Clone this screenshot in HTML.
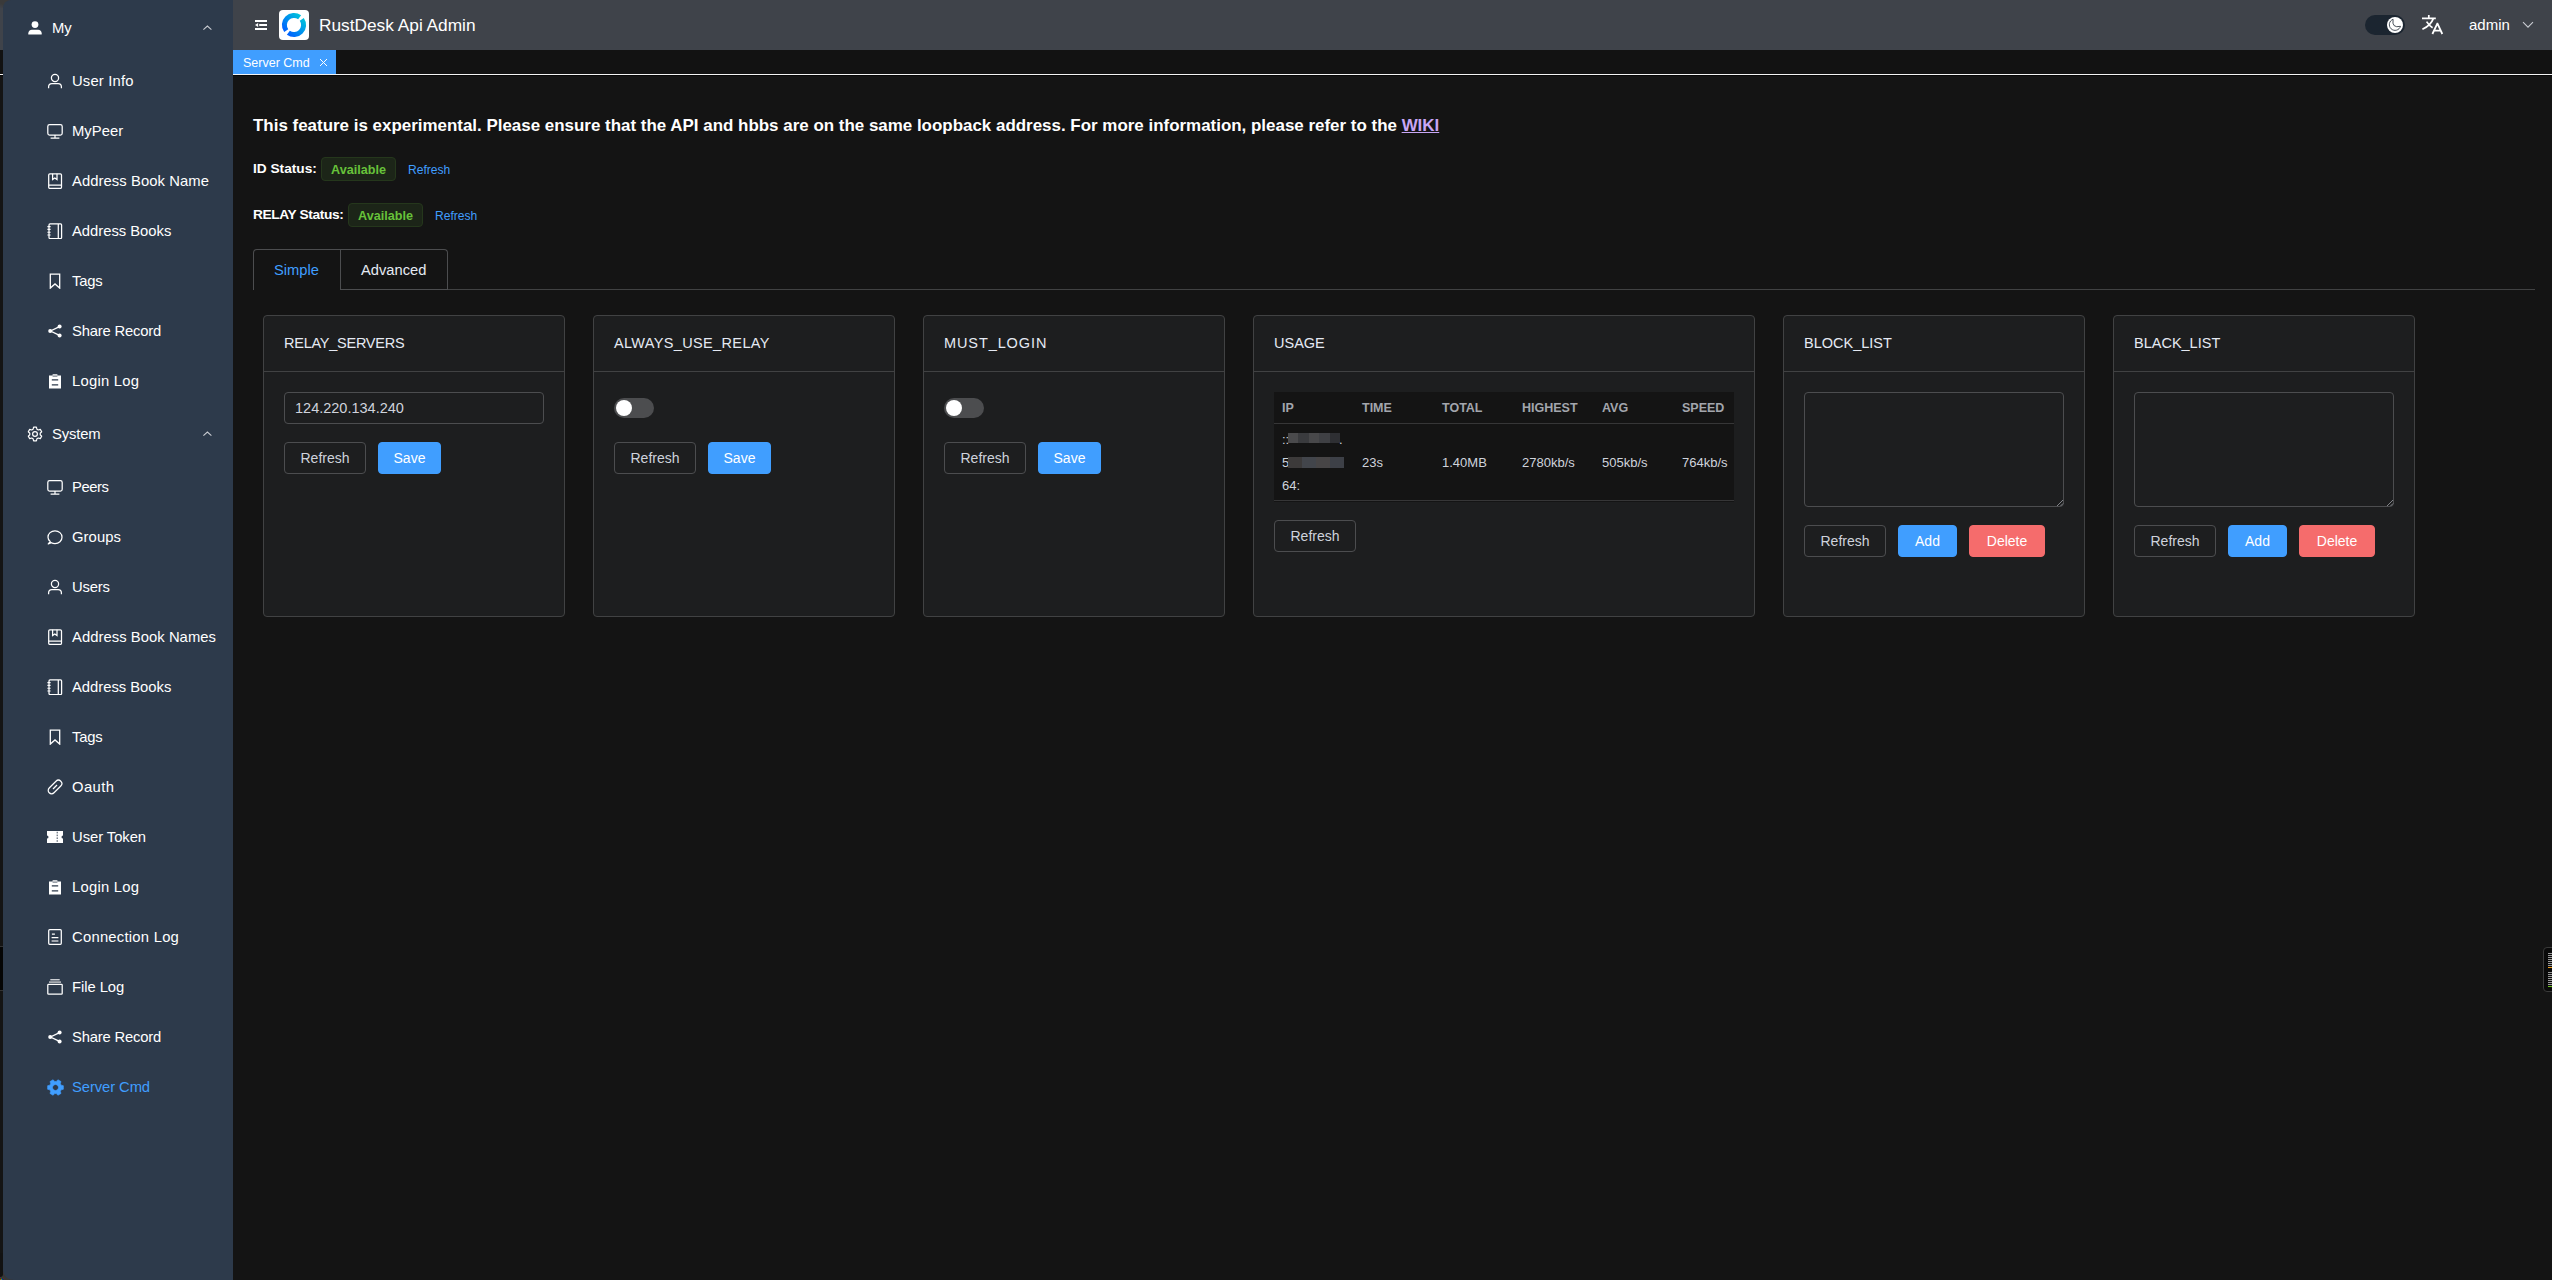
<!DOCTYPE html>
<html><head><meta charset="utf-8"><title>RustDesk Api Admin</title>
<style>
*{box-sizing:border-box;margin:0;padding:0}
html,body{width:2552px;height:1280px;overflow:hidden;background:#141414;font-family:"Liberation Sans",sans-serif;color:#e5eaf3}
.abs{position:absolute;white-space:nowrap}
#hdr{position:absolute;left:0;top:0;width:2552px;height:50px;background:#3f434a}
#tagbar{position:absolute;left:0;top:50px;width:2552px;height:24px;background:#121212}
#tagline{position:absolute;left:0;top:74px;width:2552px;height:1px;background:#f4f4f4;box-shadow:0 1px 0 #060606}
#side{position:absolute;left:3px;top:0;width:230px;height:1280px;background:#2d3a4b;border-radius:8px 0 0 10px}
.mi{position:absolute;left:0;width:230px;height:50px;font-size:14.8px;color:#fff;line-height:50px}
.mi .ic{position:absolute;left:44px;top:17px;width:16px;height:16px;line-height:0}
.mi .tx{position:absolute;left:69px;top:0;white-space:nowrap}
.mi .chev{position:absolute;left:198px;top:21px;line-height:0}
.card{position:absolute;top:315px;height:302px;background:#1d1e1f;border:1px solid #414243;border-radius:4px}
.card .ch{height:56px;border-bottom:1px solid #414243;padding-left:20px;font-size:14.5px;line-height:54px;color:#e5eaf3;white-space:nowrap}
.btn{position:absolute;height:32px;border:1px solid #4c4d4f;border-radius:4px;font-size:14px;line-height:30px;text-align:center;color:#cfd3dc;background:transparent;white-space:nowrap}
.btn.p{background:#409eff;border-color:#409eff;color:#fff}
.btn.d{background:#f56c6c;border-color:#f56c6c;color:#fff}
.sw{position:absolute;width:40px;height:20px;border-radius:10px;background:#4c4d4f}
.sw::after{content:"";position:absolute;left:2px;top:2px;width:16px;height:16px;border-radius:50%;background:#fff}
.tagok{position:absolute;height:24px;border:1px solid #25371c;background:#1c2518;border-radius:4px;color:#67c23a;font-weight:bold;font-size:12.6px;line-height:22px;padding-top:1px;text-align:center;white-space:nowrap}
.lnk{font-size:12.1px;line-height:18px;color:#409eff}
.inp{position:absolute;border:1px solid #4c4d4f;border-radius:4px}
.th{position:absolute;top:399px;font-size:12.5px;line-height:18px;font-weight:bold;color:#a3a6ad;white-space:nowrap}
.td{position:absolute;font-size:13px;line-height:23px;color:#cfd3dc;white-space:nowrap}

</style></head><body>
<div id="hdr"></div>
<div id="tagbar"></div>
<div id="tagline"></div>
<div class="abs" style="left:0;top:946px;width:3px;height:45px;background:#050505;border-top:1px solid #333;border-bottom:1px solid #333"></div>
<!-- hamburger -->
<svg class="abs" style="left:255px;top:19px" width="12" height="12" viewBox="0 0 12 12"><path d="M0 2 h12 M4.2 6 h7.8 M0 10 h12" stroke="#fff" stroke-width="2"/><path d="M0 6 l3.1-2 v4z" fill="#fff"/></svg>
<!-- logo -->
<svg class="abs" style="left:279px;top:10px" width="30" height="30" viewBox="0 0 30 30">
<defs><linearGradient id="lg" x1="0" y1="1" x2="1" y2="0"><stop offset="0" stop-color="#0062ff"/><stop offset="1" stop-color="#00c0dc"/></linearGradient></defs>
<rect x="0" y="0" width="30" height="30" rx="4" fill="#fff"/>
<path d="M7.23 20.64 A9.6 9.6 0 0 1 20.64 7.23" fill="none" stroke="url(#lg)" stroke-width="5"/>
<path d="M22.77 9.36 A9.6 9.6 0 0 1 9.36 22.77" fill="none" stroke="url(#lg)" stroke-width="5"/>
</svg>
<div class="abs" style="left:319px;top:13px;font-size:17.3px;line-height:24px;color:#fff">RustDesk Api Admin</div>
<!-- right -->
<div class="abs" style="left:2365px;top:15px;width:40px;height:20px;border-radius:10px;background:#1b2530"></div>
<div class="abs" style="left:2387px;top:17px;width:16px;height:16px;border-radius:50%;background:#fff"></div>
<svg class="abs" style="left:2387px;top:17px" width="16" height="16" viewBox="0 0 16 16"><path d="M6.1 2.3 A5.7 5.7 0 1 0 13.5 9.3 Q4.5 11.5 6.1 2.3z" fill="none" stroke="#1b2530" stroke-width="0.8"/></svg>
<svg class="abs" style="left:2421px;top:14px" width="24" height="22" viewBox="0 0 24 22"><path d="M1 4.3 h13.8 M7.8 1 v3.3 M12.3 4.6 C10.5 9.5 6.5 13 1.4 15.2 M5.6 7.6 C7.5 10.5 9.5 12.5 11.6 13.7" fill="none" stroke="#fff" stroke-width="1.7"/><path d="M11.4 20 L16.3 9.6 h0.2 L21.3 20 M13.3 16.7 h6.2" fill="none" stroke="#fff" stroke-width="1.8"/></svg>
<div class="abs" style="left:2469px;top:13px;font-size:15px;line-height:24px;color:#fff">admin</div>
<svg class="abs" style="left:2522px;top:21px" width="12" height="8" viewBox="0 0 12 8"><path d="M1 1.2 L6 6.2 L11 1.2" fill="none" stroke="#c9ccd2" stroke-width="1.1"/></svg>
<!-- active tag -->
<div class="abs" style="left:233px;top:50px;width:103px;height:24px;background:#409eff"></div>
<div class="abs" style="left:243px;top:51px;font-size:12.5px;line-height:24px;color:#fff">Server Cmd</div>
<svg class="abs" style="left:318.5px;top:57.5px" width="9" height="9" viewBox="0 0 9 9"><path d="M1 1 L8 8 M8 1 L1 8" stroke="#fff" stroke-width="1"/></svg>
<div class="abs" style="left:0;top:1268px;width:16px;height:12px;background:linear-gradient(20deg,#3a3a3a,#2f2f2f)"></div>
<div class="abs" style="left:0;top:1253px;width:3px;height:24px;background:#121212;border-radius:0 0 3px 0"></div>
<div class="abs" style="left:0;top:1279px;width:1px;height:1px;background:#f00"></div>
<div class="abs" style="left:1px;top:1279px;width:1px;height:1px;background:#0f0"></div>
<div class="abs" style="left:2px;top:1279px;width:1px;height:1px;background:#00f"></div>
<div class="abs" style="left:0;top:0;width:12px;height:8px;background:linear-gradient(200deg,#3a3a3a 60%,#3f4249)"></div>

<div id="side">
<div class="mi" style="top:3px;color:#fff"><span class="ic" style="left:24px"><svg viewBox="0 0 16 16" width="16" height="16"><circle cx="8" cy="4.6" r="3.4" fill="#fff"/><path d="M1.3 14.6 v-1.2 c0-2 1.6-3.6 3.6-3.6 h6.2 c2 0 3.6 1.6 3.6 3.6 v1.2 z" fill="#fff"/></svg></span><span class="tx" style="left:49px;letter-spacing:0px">My</span><span class="chev"><svg viewBox="0 0 12 8" width="12" height="8" fill="none" stroke="#c9ccd2" stroke-width="1.1"><path d="M2.4 5.7 L6.4 2.1 L10.4 5.7"/></svg></span></div>
<div class="mi" style="top:56px;color:#fff"><span class="ic" style="left:44px"><svg viewBox="0 0 16 16" width="16" height="16" fill="none" stroke="#fff" stroke-width="1.25"><circle cx="8" cy="5" r="3.6"/><path d="M1.6 15.3 v-1.3 c0-1.9 1.5-3.3 3.3-3.3 h6.2 c1.9 0 3.3 1.5 3.3 3.3 v1.3"/></svg></span><span class="tx" style="left:69px;letter-spacing:0.172px">User Info</span></div>
<div class="mi" style="top:106px;color:#fff"><span class="ic" style="left:44px"><svg viewBox="0 0 16 16" width="16" height="16" fill="none" stroke="#fff" stroke-width="1.25"><rect x="0.8" y="1.6" width="14.4" height="10.4" rx="1.8"/><path d="M8 12 v3 M3.6 15.2 h8.8"/></svg></span><span class="tx" style="left:69px;letter-spacing:0.037px">MyPeer</span></div>
<div class="mi" style="top:156px;color:#fff"><span class="ic" style="left:44px"><svg viewBox="0 0 16 16" width="16" height="16" fill="none" stroke="#fff" stroke-width="1.25"><rect x="1.7" y="0.8" width="12.8" height="14.6" rx="1.2"/><path d="M1.7 12.2 h12.8 M5.6 0.8 v5.8 l2.2-1.5 l2.2 1.5 v-5.8"/></svg></span><span class="tx" style="left:69px;letter-spacing:0.076px">Address Book Name</span></div>
<div class="mi" style="top:206px;color:#fff"><span class="ic" style="left:44px"><svg viewBox="0 0 16 16" width="16" height="16" fill="none" stroke="#fff" stroke-width="1.25"><rect x="2" y="0.9" width="12.6" height="14.6" rx="1"/><path d="M11.3 0.9 v14.6"/><path d="M0.4 3.6 h3.2 M0.4 6.4 h3.2 M0.4 9.2 h3.2 M0.4 12 h3.2" stroke-width="1.1"/></svg></span><span class="tx" style="left:69px;letter-spacing:-0.018px">Address Books</span></div>
<div class="mi" style="top:256px;color:#fff"><span class="ic" style="left:44px"><svg viewBox="0 0 16 16" width="16" height="16" fill="none" stroke="#fff" stroke-width="1.3"><path d="M3.3 1.2 h9.4 v13.9 l-4.7-4.2 l-4.7 4.2 z"/></svg></span><span class="tx" style="left:69px;letter-spacing:-0.218px">Tags</span></div>
<div class="mi" style="top:306px;color:#fff"><span class="ic" style="left:44px"><svg viewBox="0 0 16 16" width="16" height="16"><path d="M12.5 3.6 L3.5 8 L12.5 12.4" fill="none" stroke="#fff" stroke-width="1.3"/><circle cx="12.6" cy="3.5" r="2" fill="#fff"/><circle cx="3.2" cy="8" r="2" fill="#fff"/><circle cx="12.6" cy="12.5" r="2" fill="#fff"/></svg></span><span class="tx" style="left:69px;letter-spacing:-0.192px">Share Record</span></div>
<div class="mi" style="top:356px;color:#fff"><span class="ic" style="left:44px"><svg viewBox="0 0 16 16" width="16" height="16"><path d="M2 2.4 h3.6 v-1.2 h4.8 v1.2 h3.6 v13 h-12 z" fill="#fff"/><path d="M4.8 6.9 h6.4 M4.8 11.9 h6.4" stroke="#2d3a4b" stroke-width="1.2"/><path d="M5.6 3.1 h4.8" stroke="#2d3a4b" stroke-width="0.8"/></svg></span><span class="tx" style="left:69px;letter-spacing:0.248px">Login Log</span></div>
<div class="mi" style="top:409px;color:#fff"><span class="ic" style="left:24px"><svg viewBox="0 0 16 16" width="16" height="16" fill="none" stroke="#fff" stroke-width="1.2"><path d="M6.6 1.2 h2.8 l0.5 2 l1.4 0.8 l2-0.6 l1.4 2.4 l-1.5 1.4 v1.6 l1.5 1.4 l-1.4 2.4 l-2-0.6 l-1.4 0.8 l-0.5 2 h-2.8 l-0.5-2 l-1.4-0.8 l-2 0.6 l-1.4-2.4 l1.5-1.4 v-1.6 l-1.5-1.4 l1.4-2.4 l2 0.6 l1.4-0.8 z" stroke-linejoin="round"/><circle cx="8" cy="8" r="2.4"/></svg></span><span class="tx" style="left:49px;letter-spacing:-0.14px">System</span><span class="chev"><svg viewBox="0 0 12 8" width="12" height="8" fill="none" stroke="#c9ccd2" stroke-width="1.1"><path d="M2.4 5.7 L6.4 2.1 L10.4 5.7"/></svg></span></div>
<div class="mi" style="top:462px;color:#fff"><span class="ic" style="left:44px"><svg viewBox="0 0 16 16" width="16" height="16" fill="none" stroke="#fff" stroke-width="1.25"><rect x="0.8" y="1.6" width="14.4" height="10.4" rx="1.8"/><path d="M8 12 v3 M3.6 15.2 h8.8"/></svg></span><span class="tx" style="left:69px;letter-spacing:-0.432px">Peers</span></div>
<div class="mi" style="top:512px;color:#fff"><span class="ic" style="left:44px"><svg viewBox="0 0 16 16" width="16" height="16" fill="none" stroke="#fff" stroke-width="1.25"><path d="M3.2 12.6 C1.8 11.5 1 10 1 8.2 C1 4.6 4.1 1.8 8 1.8 s7 2.8 7 6.4 s-3.1 6.4-7 6.4 c-1.3 0-2.6-0.3-3.6-0.9 L1.3 14.9 z" stroke-linejoin="round"/></svg></span><span class="tx" style="left:69px;letter-spacing:0.078px">Groups</span></div>
<div class="mi" style="top:562px;color:#fff"><span class="ic" style="left:44px"><svg viewBox="0 0 16 16" width="16" height="16" fill="none" stroke="#fff" stroke-width="1.25"><circle cx="8" cy="5" r="3.6"/><path d="M1.6 15.3 v-1.3 c0-1.9 1.5-3.3 3.3-3.3 h6.2 c1.9 0 3.3 1.5 3.3 3.3 v1.3"/></svg></span><span class="tx" style="left:69px;letter-spacing:-0.178px">Users</span></div>
<div class="mi" style="top:612px;color:#fff"><span class="ic" style="left:44px"><svg viewBox="0 0 16 16" width="16" height="16" fill="none" stroke="#fff" stroke-width="1.25"><rect x="1.7" y="0.8" width="12.8" height="14.6" rx="1.2"/><path d="M1.7 12.2 h12.8 M5.6 0.8 v5.8 l2.2-1.5 l2.2 1.5 v-5.8"/></svg></span><span class="tx" style="left:69px;letter-spacing:0.05px">Address Book Names</span></div>
<div class="mi" style="top:662px;color:#fff"><span class="ic" style="left:44px"><svg viewBox="0 0 16 16" width="16" height="16" fill="none" stroke="#fff" stroke-width="1.25"><rect x="2" y="0.9" width="12.6" height="14.6" rx="1"/><path d="M11.3 0.9 v14.6"/><path d="M0.4 3.6 h3.2 M0.4 6.4 h3.2 M0.4 9.2 h3.2 M0.4 12 h3.2" stroke-width="1.1"/></svg></span><span class="tx" style="left:69px;letter-spacing:-0.018px">Address Books</span></div>
<div class="mi" style="top:712px;color:#fff"><span class="ic" style="left:44px"><svg viewBox="0 0 16 16" width="16" height="16" fill="none" stroke="#fff" stroke-width="1.3"><path d="M3.3 1.2 h9.4 v13.9 l-4.7-4.2 l-4.7 4.2 z"/></svg></span><span class="tx" style="left:69px;letter-spacing:-0.218px">Tags</span></div>
<div class="mi" style="top:762px;color:#fff"><span class="ic" style="left:44px"><svg viewBox="0 0 16 16" width="16" height="16" fill="none" stroke="#fff" stroke-width="1.2"><rect x="-0.2" y="4.6" width="16.4" height="6.8" rx="3.4" transform="rotate(-45 8 8)"/><path d="M6 10 L10 6"/></svg></span><span class="tx" style="left:69px;letter-spacing:0.388px">Oauth</span></div>
<div class="mi" style="top:812px;color:#fff"><span class="ic" style="left:44px"><svg viewBox="0 0 16 16" width="16" height="16"><path d="M-0.1 2 h16.2 v4.4 a1.6 1.6 0 0 0 0 3.2 v4.4 h-16.2 v-4.4 a1.6 1.6 0 0 0 0-3.2 z" fill="#fff"/><path d="M10.2 2.8 v10.6" stroke="#2d3a4b" stroke-width="0.9" stroke-dasharray="1.6 1.2"/></svg></span><span class="tx" style="left:69px;letter-spacing:-0.058px">User Token</span></div>
<div class="mi" style="top:862px;color:#fff"><span class="ic" style="left:44px"><svg viewBox="0 0 16 16" width="16" height="16"><path d="M2 2.4 h3.6 v-1.2 h4.8 v1.2 h3.6 v13 h-12 z" fill="#fff"/><path d="M4.8 6.9 h6.4 M4.8 11.9 h6.4" stroke="#2d3a4b" stroke-width="1.2"/><path d="M5.6 3.1 h4.8" stroke="#2d3a4b" stroke-width="0.8"/></svg></span><span class="tx" style="left:69px;letter-spacing:0.248px">Login Log</span></div>
<div class="mi" style="top:912px;color:#fff"><span class="ic" style="left:44px"><svg viewBox="0 0 16 16" width="16" height="16" fill="none" stroke="#fff" stroke-width="1.25"><rect x="1.7" y="0.7" width="12.6" height="14.6" rx="1"/><path d="M4.9 5 h3 M4.6 8.5 h6.8"/><path d="M4.6 12 h6.8" stroke="#c8cbd0" stroke-width="1.5"/></svg></span><span class="tx" style="left:69px;letter-spacing:0.245px">Connection Log</span></div>
<div class="mi" style="top:962px;color:#fff"><span class="ic" style="left:44px"><svg viewBox="0 0 16 16" width="16" height="16" fill="none" stroke="#fff" stroke-width="1.25"><rect x="0.8" y="5.3" width="14.4" height="9.9" rx="0.8"/><path d="M3.3 0.8 h9.4" stroke-width="1.1"/><path d="M2 3.1 h12" stroke="#b8bbc0" stroke-width="1.6"/></svg></span><span class="tx" style="left:69px;letter-spacing:-0.057px">File Log</span></div>
<div class="mi" style="top:1012px;color:#fff"><span class="ic" style="left:44px"><svg viewBox="0 0 16 16" width="16" height="16"><path d="M12.5 3.6 L3.5 8 L12.5 12.4" fill="none" stroke="#fff" stroke-width="1.3"/><circle cx="12.6" cy="3.5" r="2" fill="#fff"/><circle cx="3.2" cy="8" r="2" fill="#fff"/><circle cx="12.6" cy="12.5" r="2" fill="#fff"/></svg></span><span class="tx" style="left:69px;letter-spacing:-0.192px">Share Record</span></div>
<div class="mi" style="top:1062px;color:#409eff"><span class="ic" style="left:44px"><svg viewBox="0 0 16 16" width="17" height="17" style="margin:-0.5px 0 0 -0.5px"><path fill-rule="evenodd" fill="#409eff" d="M6.3 0.6 h3.4 l0.5 2.1 l1.3 0.75 l2.1-0.6 l1.7 2.9 l-1.6 1.5 v1.5 l1.6 1.5 l-1.7 2.9 l-2.1-0.6 l-1.3 0.75 l-0.5 2.1 h-3.4 l-0.5-2.1 l-1.3-0.75 l-2.1 0.6 l-1.7-2.9 l1.6-1.5 v-1.5 l-1.6-1.5 l1.7-2.9 l2.1 0.6 l1.3-0.75 z M8 5.2 a2.8 2.8 0 1 0 0.001 0 z" stroke="#409eff" stroke-width="0.6" stroke-linejoin="round" transform="rotate(90 8 8)"/></svg></span><span class="tx" style="left:69px;letter-spacing:-0.094px">Server Cmd</span></div>
</div>
<!-- warning -->
<div class="abs" style="left:253px;top:114px;font-size:16.95px;line-height:24px;font-weight:bold;color:#fff">This feature is experimental. Please ensure that the API and hbbs are on the same loopback address. For more information, please refer to the <span style="color:#c8a6f5;text-decoration:underline">WIKI</span></div>
<!-- status rows -->
<div class="abs" style="left:253px;top:160px;font-size:13.7px;line-height:18px;font-weight:bold;color:#fff">ID Status:</div>
<div class="tagok" style="left:321px;top:157px;width:75px">Available</div>
<div class="abs lnk" style="left:408px;top:161px">Refresh</div>
<div class="abs" style="left:253px;top:206px;font-size:13.7px;line-height:18px;font-weight:bold;color:#fff;letter-spacing:-0.35px">RELAY Status:</div>
<div class="tagok" style="left:348px;top:203px;width:75px">Available</div>
<div class="abs lnk" style="left:435px;top:207px">Refresh</div>
<!-- tabs -->
<div class="abs" style="left:253px;top:289px;width:2282px;height:1px;background:#414243"></div>
<div class="abs" style="left:253px;top:249px;width:195px;height:41px;border:1px solid #4c4d4f;border-bottom:none;border-radius:4px 4px 0 0;background:#141414"></div>
<div class="abs" style="left:340px;top:249px;width:1px;height:41px;background:#4c4d4f"></div>
<div class="abs" style="left:340px;top:289px;width:108px;height:1px;background:#4c4d4f"></div>
<div class="abs" style="left:274px;top:260px;font-size:14.7px;line-height:20px;color:#409eff">Simple</div>
<div class="abs" style="left:361px;top:260px;font-size:14.7px;line-height:20px;color:#e5eaf3">Advanced</div>

<!-- card 1 -->
<div class="card" style="left:263px;width:302px"><div class="ch" style="letter-spacing:-0.25px">RELAY_SERVERS</div></div>
<div class="inp" style="left:284px;top:392px;width:260px;height:32px"></div>
<div class="abs" style="left:295px;top:398px;font-size:14.5px;line-height:20px;color:#cfd3dc">124.220.134.240</div>
<div class="btn" style="left:284px;top:442px;width:82px">Refresh</div>
<div class="btn p" style="left:378px;top:442px;width:63px">Save</div>

<!-- card 2 -->
<div class="card" style="left:593px;width:302px"><div class="ch" style="letter-spacing:0.35px">ALWAYS_USE_RELAY</div></div>
<div class="sw" style="left:614px;top:398px"></div>
<div class="btn" style="left:614px;top:442px;width:82px">Refresh</div>
<div class="btn p" style="left:708px;top:442px;width:63px">Save</div>

<!-- card 3 -->
<div class="card" style="left:923px;width:302px"><div class="ch" style="letter-spacing:0.9px">MUST_LOGIN</div></div>
<div class="sw" style="left:944px;top:398px"></div>
<div class="btn" style="left:944px;top:442px;width:82px">Refresh</div>
<div class="btn p" style="left:1038px;top:442px;width:63px">Save</div>

<!-- card 4 usage -->
<div class="card" style="left:1253px;width:502px"><div class="ch">USAGE</div></div>
<div class="abs" style="left:1274px;top:392px;width:460px;height:110px;background:#141414"></div>
<div class="abs" style="left:1274px;top:423px;width:460px;height:1px;background:#363637"></div>
<div class="abs" style="left:1274px;top:500px;width:460px;height:1px;background:#363637"></div>
<div class="th" style="left:1282px">IP</div>
<div class="th" style="left:1362px">TIME</div>
<div class="th" style="left:1442px">TOTAL</div>
<div class="th" style="left:1522px">HIGHEST</div>
<div class="th" style="left:1602px">AVG</div>
<div class="th" style="left:1682px">SPEED</div>
<div class="td" style="left:1282px;top:428px">::</div>
<div class="abs" style="left:1288px;top:433px;width:52px;height:10px;background:linear-gradient(90deg,#4a4a4c 0,#4a4a4c 20%,#3a3b3e 20%,#3a3b3e 40%,#48484a 40%,#48484a 60%,#3f4044 60%,#3f4044 80%,#2e2f33 80%)"></div>
<div class="td" style="left:1339px;top:428px">.</div>
<div class="td" style="left:1282px;top:451px">5</div>
<div class="abs" style="left:1288px;top:457px;width:56px;height:11px;background:linear-gradient(90deg,#3c3a3a 0,#3c3a3a 25%,#42454b 25%,#42454b 50%,#474546 50%,#474546 75%,#3d4047 75%)"></div>
<div class="td" style="left:1282px;top:474px">64:</div>
<div class="td" style="left:1362px;top:451px">23s</div>
<div class="td" style="left:1442px;top:451px">1.40MB</div>
<div class="td" style="left:1522px;top:451px">2780kb/s</div>
<div class="td" style="left:1602px;top:451px">505kb/s</div>
<div class="td" style="left:1682px;top:451px">764kb/s</div>
<div class="btn" style="left:1274px;top:520px;width:82px">Refresh</div>

<!-- card 5 -->
<div class="card" style="left:1783px;width:302px"><div class="ch">BLOCK_LIST</div></div>
<div class="inp" style="left:1804px;top:392px;width:260px;height:115px"></div>
<svg class="abs" style="left:2056px;top:499px" width="8" height="8" viewBox="0 0 8 8"><path d="M7 1 L1 7 M7 4.5 L4.5 7" stroke="#8d9095" stroke-width="0.9"/></svg>
<div class="btn" style="left:1804px;top:525px;width:82px">Refresh</div>
<div class="btn p" style="left:1898px;top:525px;width:59px">Add</div>
<div class="btn d" style="left:1969px;top:525px;width:76px">Delete</div>

<!-- card 6 -->
<div class="card" style="left:2113px;width:302px"><div class="ch">BLACK_LIST</div></div>
<div class="inp" style="left:2134px;top:392px;width:260px;height:115px"></div>
<svg class="abs" style="left:2386px;top:499px" width="8" height="8" viewBox="0 0 8 8"><path d="M7 1 L1 7 M7 4.5 L4.5 7" stroke="#8d9095" stroke-width="0.9"/></svg>
<div class="btn" style="left:2134px;top:525px;width:82px">Refresh</div>
<div class="btn p" style="left:2228px;top:525px;width:59px">Add</div>
<div class="btn d" style="left:2299px;top:525px;width:76px">Delete</div>

<!-- right edge widget -->
<div class="abs" style="left:2543px;top:947px;width:20px;height:45px;border:1px solid #3a3a3a;border-radius:4px;background:#0a0a0a"></div>
<div class="abs" style="left:2548px;top:953px;width:6px;height:14px;background:repeating-linear-gradient(#999 0,#999 1px,transparent 1px,transparent 2px)"></div>
<div class="abs" style="left:2548px;top:967px;width:6px;height:1px;background:#f0a020"></div>
<div class="abs" style="left:2548px;top:972px;width:6px;height:14px;background:repeating-linear-gradient(#999 0,#999 1px,transparent 1px,transparent 2px)"></div>
<div class="abs" style="left:2548px;top:986px;width:6px;height:1px;background:#6ac020"></div>

</body></html>
